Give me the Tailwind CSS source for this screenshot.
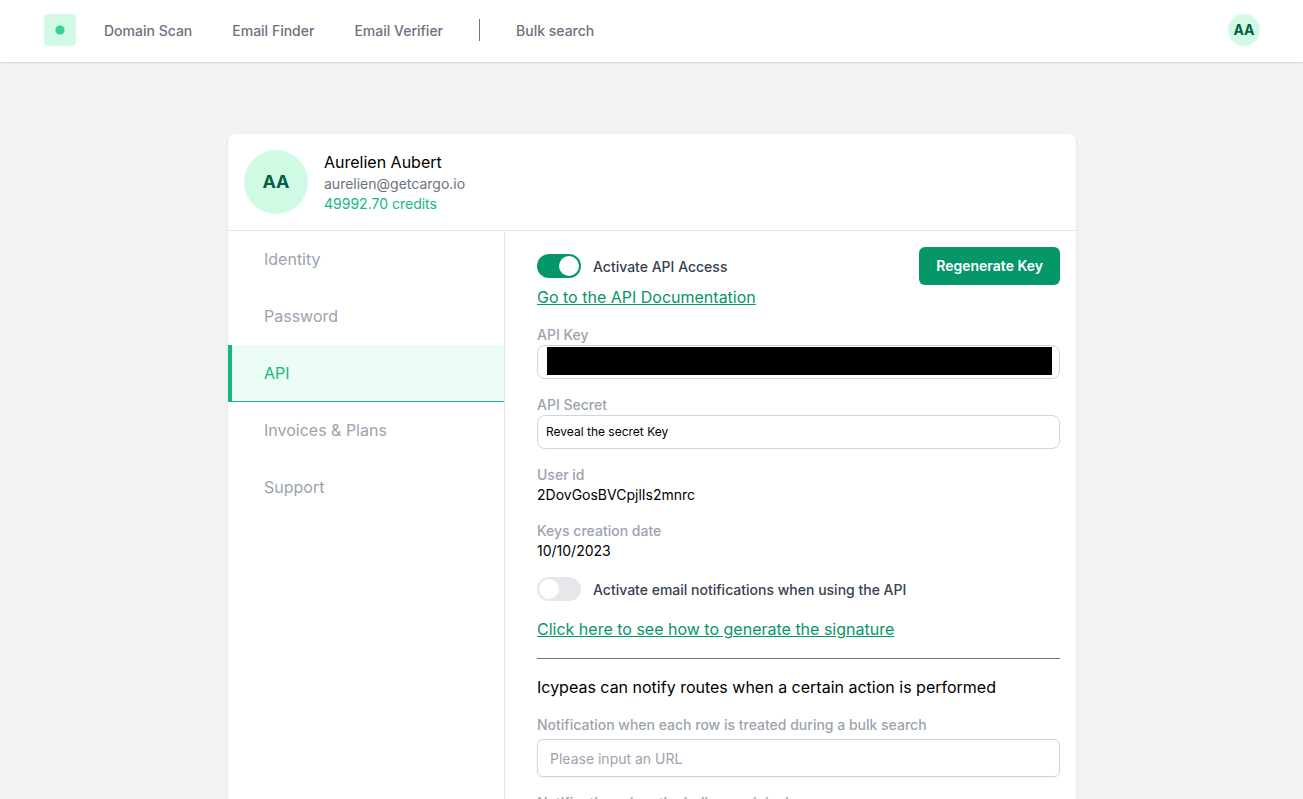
<!DOCTYPE html>
<html lang="en">
<head>
<meta charset="utf-8">
<meta name="viewport" content="width=device-width, initial-scale=1">
<title>Icypeas - API</title>
<script src="https://cdn.jsdelivr.net/npm/@tailwindcss/browser@4"></script>
</head>
<body class="h-screen overflow-hidden bg-[#f2f3f5] font-[Inter,sans-serif] text-base text-black">
<header class="bg-white shadow-sm">
  <div class="flex h-[62px] items-center justify-between pr-[43px] pl-11">
    <nav class="flex items-center text-sm font-medium text-[#6b7280]">
      <a href="#" aria-label="Home" class="mb-0.5 mr-7 flex size-8 items-center justify-center rounded bg-[#d1fae5]">
        <svg class="size-8" viewBox="0 0 32 32" aria-hidden="true"><circle cx="16" cy="16" r="4.6" fill="#34d399"/></svg>
      </a>
      <a href="#" class="mr-10">Domain Scan</a>
      <a href="#" class="mr-10">Email Finder</a>
      <a href="#">Email Verifier</a>
      <span class="mx-9 mb-0.5 h-[22px] w-px bg-[#6b7280]"></span>
      <a href="#">Bulk search</a>
    </nav>
    <button type="button" class="mb-0.5 flex size-8 items-center justify-center rounded-full bg-[#d1fae5] text-sm font-bold text-[#065f46]">AA</button>
  </div>
</header>
<div class="pt-[72px] pl-px">
<main class="mx-auto max-w-[848px] rounded-lg bg-white shadow-[0_1px_3px_rgba(0,0,0,0.1)]">
  <section class="flex items-center gap-4 border-b border-[#e5e7eb] p-4">
    <div class="flex size-16 items-center justify-center rounded-full bg-[#d1fae5] text-lg font-bold text-[#065f46]">AA</div>
    <div>
      <h1 class="leading-6">Aurelien Aubert</h1>
      <p class="text-sm leading-5 text-[#6b7280]">aurelien@getcargo.io</p>
      <p class="text-sm leading-5 text-[#10b981]">49992.70 credits</p>
    </div>
  </section>
  <div class="flex">
    <nav class="flex w-[277px] flex-none flex-col border-r border-[#e5e7eb] text-[#9ca3af]">
      <a href="#" class="flex h-[57px] items-center border-b border-l-4 border-transparent pl-8">Identity</a>
      <a href="#" class="flex h-[57px] items-center border-b border-l-4 border-transparent pl-8">Password</a>
      <a href="#" aria-current="page" class="flex h-[57px] items-center border-b border-l-4 border-[#10b981] bg-[#ecfdf5] pl-8 text-[#10b981]">API</a>
      <a href="#" class="flex h-[57px] items-center border-b border-l-4 border-transparent pl-8">Invoices &amp; Plans</a>
      <a href="#" class="flex h-[57px] items-center border-b border-l-4 border-transparent pl-8">Support</a>
    </nav>
    <section class="min-w-0 flex-1 pt-4 pr-4 pb-8 pl-8 text-sm">
      <div class="flex h-[38px] items-center justify-between">
        <label class="flex items-center font-medium text-[#374151]">
          <input type="checkbox" checked class="sr-only">
          <span class="mr-3 flex h-6 w-11 items-center justify-end rounded-full bg-[#059669] p-0.5"><span class="size-5 rounded-full bg-white"></span></span>
          <span class="pt-0.5">Activate API Access</span>
        </label>
        <button type="button" class="h-[38px] rounded-md bg-[#059669] px-[17px] font-semibold text-white">Regenerate Key</button>
      </div>
      <a href="#" class="block text-base text-[#059669] underline">Go to the API Documentation</a>
      <label for="api-key" class="mt-4 block font-medium text-[#9ca3af]">API Key</label>
      <div class="rounded-lg border border-[#d1d5db] pt-px pr-[7px] pb-[3px] pl-[9px]">
        <input id="api-key" type="text" readonly value="" class="block h-[28px] w-full bg-black">
      </div>
      <label for="api-secret" class="mt-4 block font-medium text-[#9ca3af]">API Secret</label>
      <button id="api-secret" type="button" class="block h-[34px] w-full rounded-lg border border-[#d1d5db] px-2 text-left text-xs">Reveal the secret Key</button>
      <dl>
        <dt class="mt-4 font-medium text-[#9ca3af]">User id</dt>
        <dd>2DovGosBVCpjlIs2mnrc</dd>
        <dt class="mt-4 font-medium text-[#9ca3af]">Keys creation date</dt>
        <dd>10/10/2023</dd>
      </dl>
      <label class="mt-4 flex items-center font-medium text-[#374151]">
        <input type="checkbox" class="sr-only">
        <span class="mr-3 flex h-6 w-11 items-center rounded-full bg-[#e5e7eb] p-0.5"><span class="size-5 rounded-full bg-white"></span></span>
        <span class="pt-0.5">Activate email notifications when using the API</span>
      </label>
      <a href="#" class="mt-4 block text-base text-[#059669] underline">Click here to see how to generate the signature</a>
      <hr class="mt-[17px] mb-4 border-[#6b7280]">
      <h2 class="text-base">Icypeas can notify routes when a certain action is performed</h2>
      <label for="row-url" class="mt-4 block font-medium text-[#9ca3af]">Notification when each row is treated during a bulk search</label>
      <input id="row-url" type="url" placeholder="Please input an URL" class="mt-1 block h-[38px] w-full rounded-md border border-[#d1d5db] px-3 shadow-xs placeholder:text-[#9ca3af]">
      <label for="bulk-url" class="mt-4 block font-medium text-[#9ca3af]">Notification when the bulk search is done</label>
      <input id="bulk-url" type="url" placeholder="Please input an URL" class="mt-1 block h-[38px] w-full rounded-md border border-[#d1d5db] px-3 shadow-xs placeholder:text-[#9ca3af]">
    </section>
  </div>
</main>
</div>
</body>
</html>
